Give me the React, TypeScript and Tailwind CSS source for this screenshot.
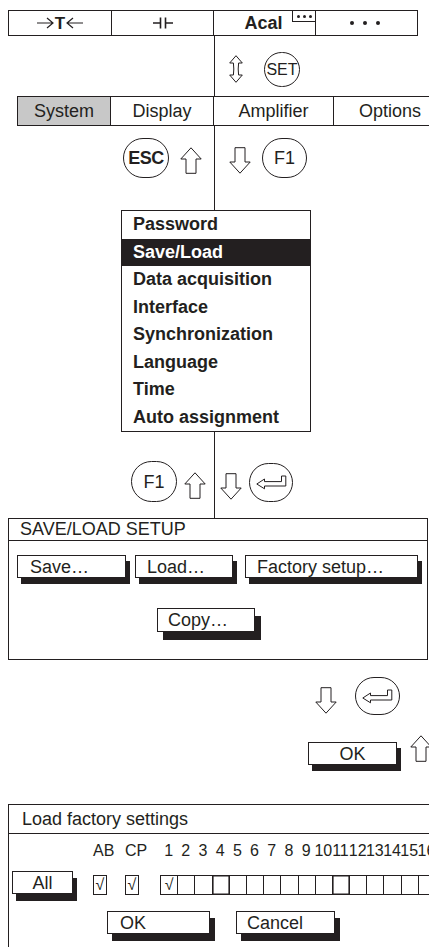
const INK = '#231f20';

function UpArrow({ className = '', flip = false }: { className?: string; flip?: boolean }) {
  return (
    <svg
      width="22"
      height="27"
      viewBox="0 0 22 27"
      className={`shrink-0 ${flip ? 'rotate-180' : ''} ${className}`}
    >
      <path
        d="M11 0.8 L21.2 12 H16 V26.3 H6 V12 H0.8 Z"
        fill="white"
        stroke={INK}
        strokeWidth="1"
      />
    </svg>
  );
}

function UpDownArrow({ className = '' }: { className?: string }) {
  return (
    <svg width="14" height="28" viewBox="0 0 14 28" className={`shrink-0 ${className}`}>
      <path
        d="M7 0.7 L13.3 8 H9.6 Q8.8 14 9.6 20 H13.3 L7 27.3 L0.7 20 H4.4 Q5.2 14 4.4 8 H0.7 Z"
        fill="white"
        stroke={INK}
        strokeWidth="1"
      />
    </svg>
  );
}

function EnterGlyph() {
  return (
    <svg width="31" height="15" viewBox="0 0 31 15">
      <path
        d="M0.8 9 L8.5 4 V6.6 H25.5 V1 H29.8 V11 H8.5 V13.8 Z"
        fill="white"
        stroke={INK}
        strokeWidth="1"
      />
    </svg>
  );
}

function Key({ className = '', children }: { className?: string; children: React.ReactNode }) {
  return (
    <div
      className={`flex shrink-0 items-center justify-center rounded-full border border-[#231f20] bg-white ${className}`}
    >
      {children}
    </div>
  );
}

function Btn({ className = '', children }: { className?: string; children: React.ReactNode }) {
  return (
    <div
      className={`flex h-[23px] shrink-0 items-center border border-[#231f20] bg-white text-[18px] leading-none ${className}`}
    >
      {children}
    </div>
  );
}

function VLine() {
  return <div className="w-px shrink-0 self-stretch bg-[#231f20]" />;
}

function ArrowRight({ flip = false }: { flip?: boolean }) {
  return (
    <svg width="17" height="12" viewBox="0 0 17 12" className={flip ? 'rotate-180' : ''}>
      <path d="M0 6 H16 M10 1 L16 6 L10 11" fill="none" stroke={INK} strokeWidth="1.2" />
    </svg>
  );
}

const menu = [
  'Password',
  'Save/Load',
  'Data acquisition',
  'Interface',
  'Synchronization',
  'Language',
  'Time',
  'Auto assignment',
];

const channels = Array.from({ length: 16 }, (_, i) => i + 1);

export default function App() {
  return (
    <div className="relative h-[947px] w-[429px] overflow-hidden bg-white font-['Liberation_Sans',Arial,sans-serif] text-[#231f20]">
      {/* status bar */}
      <div className="ml-[8px] mt-[10px] flex h-[26px] w-[410px] border border-[#231f20]">
        <div className="flex w-[103px] items-center justify-center border-r border-[#231f20]">
          <ArrowRight />
          <span className="px-[1px] text-[17px] font-bold leading-none">T</span>
          <ArrowRight flip />
        </div>
        <div className="flex w-[102px] items-center justify-center border-r border-[#231f20]">
          <svg width="20" height="14" viewBox="0 0 20 14">
            <path d="M0 7 H7 M7.5 1.5 V12.5 M12.5 1.5 V12.5 M13 7 H20" fill="none" stroke={INK} strokeWidth="1.6" />
          </svg>
        </div>
        <div className="relative flex w-[102px] items-center justify-center border-r border-[#231f20]">
          <span className="mr-[2px] text-[18px] font-bold leading-none">Acal</span>
          <div className="absolute right-0 top-0 flex h-[11px] w-[23px] items-center justify-center gap-[3px] border-b border-l border-[#231f20]">
            <div className="h-[3px] w-[3px] rounded-full bg-[#231f20]" />
            <div className="h-[3px] w-[3px] rounded-full bg-[#231f20]" />
            <div className="h-[3px] w-[3px] rounded-full bg-[#231f20]" />
          </div>
        </div>
        <div className="flex flex-1 items-center justify-center gap-[9px] pr-[3px]">
          <div className="h-[4px] w-[4px] rounded-full bg-[#231f20]" />
          <div className="h-[4px] w-[4px] rounded-full bg-[#231f20]" />
          <div className="h-[4px] w-[4px] rounded-full bg-[#231f20]" />
        </div>
      </div>

      {/* SET */}
      <div className="flex h-[60px] items-start">
        <div className="ml-[214px] flex self-stretch">
          <VLine />
        </div>
        <UpDownArrow className="ml-[14px] mt-[19px]" />
        <Key className="ml-[21px] mt-[16px] h-[35px] w-[36px]">
          <span className="text-[16px] leading-none">SET</span>
        </Key>
      </div>

      {/* tabs */}
      <div className="ml-[17px] flex h-[30px] w-[440px] border-y border-l border-[#231f20] text-[18px]">
        <div className="flex w-[93px] items-center justify-center border-r border-[#231f20] bg-[#c8c8c8]">System</div>
        <div className="flex w-[103px] items-center justify-center border-r border-[#231f20]">Display</div>
        <div className="flex w-[120px] items-center justify-center border-r border-[#231f20]">Amplifier</div>
        <div className="flex w-[112px] items-center justify-center">Options</div>
      </div>

      {/* ESC / F1 */}
      <div className="flex h-[84px] items-start">
        <Key className="ml-[123px] mt-[12px] h-[40px] w-[46px]">
          <span className="text-[18px] font-bold leading-none tracking-[-0.5px]">ESC</span>
        </Key>
        <UpArrow className="ml-[11px] mt-[21px]" />
        <div className="ml-[12px] flex self-stretch">
          <VLine />
        </div>
        <UpArrow flip className="ml-[14px] mt-[21px]" />
        <Key className="ml-[11px] mt-[12px] h-[40px] w-[45px]">
          <span className="text-[18px] leading-none">F1</span>
        </Key>
      </div>

      {/* menu */}
      <div className="ml-[121px] flex h-[222px] w-[190px] flex-col border border-[#231f20]">
        {menu.map((m) => (
          <div
            key={m}
            className={`flex flex-1 items-center pl-[11px] text-[18px] font-bold ${
              m === 'Save/Load' ? 'bg-[#231f20] text-white' : ''
            }`}
          >
            {m}
          </div>
        ))}
      </div>

      {/* F1 / enter */}
      <div className="flex h-[86px] items-start">
        <Key className="ml-[131px] mt-[29px] h-[41px] w-[46px]">
          <span className="text-[18px] leading-none">F1</span>
        </Key>
        <UpArrow className="ml-[7px] mt-[40px]" />
        <div className="ml-[8px] flex self-stretch">
          <VLine />
        </div>
        <UpArrow flip className="ml-[5px] mt-[41px]" />
        <Key className="ml-[7px] mt-[31px] h-[39px] w-[44px]">
          <EnterGlyph />
        </Key>
      </div>

      {/* SAVE/LOAD SETUP */}
      <div className="ml-[8px] h-[142px] w-[420px] border border-[#231f20]">
        <div className="h-[22px] border-b border-[#231f20] pl-[11px] text-[18px] leading-[21px]">SAVE/LOAD SETUP</div>
        <div className="mt-[14px] flex">
          <Btn className="ml-[8px] w-[109px] pl-[12px] shadow-[4px_6px_0_#231f20]">Save…</Btn>
          <Btn className="ml-[9px] w-[98px] pl-[11px] shadow-[4px_6px_0_#231f20]">Load…</Btn>
          <Btn className="ml-[12px] w-[173px] pl-[11px] shadow-[4px_6px_0_#231f20]">Factory setup…</Btn>
        </div>
        <div className="mt-[30px] flex">
          <Btn className="ml-[148px] h-[24px] w-[98px] pl-[10px] shadow-[6px_8px_0_#231f20]">Copy…</Btn>
        </div>
      </div>

      {/* enter / OK */}
      <div className="h-[144px]">
        <div className="flex h-[82px] items-start">
          <UpArrow flip className="ml-[315px] mt-[27px]" />
          <Key className="ml-[18px] mt-[17px] h-[38px] w-[45px]">
            <EnterGlyph />
          </Key>
        </div>
        <div className="flex items-start">
          <Btn className="ml-[308px] w-[89px] justify-center shadow-[4px_6px_0_#231f20]">OK</Btn>
          <UpArrow className="ml-[13px] mt-[-7px]" />
        </div>
      </div>

      {/* Load factory settings */}
      <div className="ml-[8px] h-[143px] w-[440px] border-l border-t border-[#231f20]">
        <div className="h-[29px] border-b border-[#231f20] pl-[13px] text-[18px] leading-[28px]">
          Load factory settings
        </div>
        <div className="mt-[8px] flex h-[18px] text-[16px] leading-[18px]">
          <div className="ml-[84px] w-[32px]">AB</div>
          <div className="w-[35px]">CP</div>
          {channels.map((c) => (
            <div key={c} className="flex w-[17.2px] shrink-0 justify-center whitespace-nowrap">
              {c}
            </div>
          ))}
        </div>
        <div className="mt-[11px] flex items-start">
          <Btn className="ml-[3px] w-[61px] justify-center shadow-[4px_7px_0_#231f20]">All</Btn>
          <div className="ml-[20px] mt-[4px] flex h-[20px] w-[14px] items-end justify-center border border-[#231f20] pb-[1px] text-[16px] leading-none">
            √
          </div>
          <div className="ml-[18px] mt-[4px] flex h-[20px] w-[14px] items-end justify-center border border-[#231f20] pb-[1px] text-[16px] leading-none">
            √
          </div>
          <div className="ml-[21px] mt-[4px] flex h-[20px] border-y border-[#231f20]">
            {channels.map((c) => (
              <div
                key={c}
                className={`flex h-full w-[17.2px] shrink-0 items-end justify-center border-l border-[#231f20] pb-[1px] text-[16px] leading-none ${
                  c === 4 || c === 11 ? 'shadow-[inset_0_0_0_0.6px_#231f20]' : ''
                }`}
              >
                {c === 1 ? '√' : ''}
              </div>
            ))}
          </div>
        </div>
        <div className="mt-[16px] flex">
          <Btn className="ml-[98px] w-[103px] pl-[12px] shadow-[5px_7px_0_#231f20]">OK</Btn>
          <Btn className="ml-[26px] w-[99px] pl-[10px] shadow-[5px_7px_0_#231f20]">Cancel</Btn>
        </div>
      </div>
    </div>
  );
}
